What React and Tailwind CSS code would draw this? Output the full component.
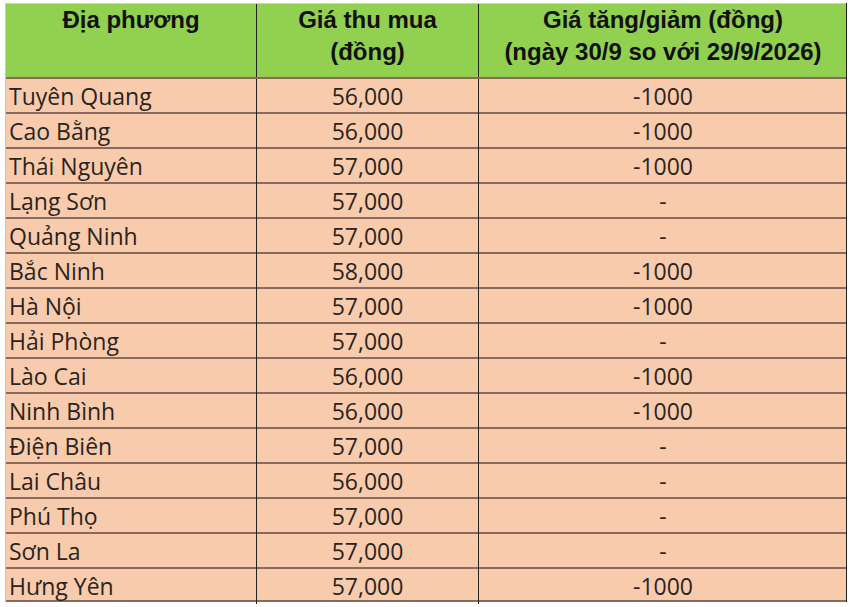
import React from "react";

const rows = [
  ["Tuyên Quang", "56,000", "-1000"],
  ["Cao Bằng", "56,000", "-1000"],
  ["Thái Nguyên", "57,000", "-1000"],
  ["Lạng Sơn", "57,000", "-"],
  ["Quảng Ninh", "57,000", "-"],
  ["Bắc Ninh", "58,000", "-1000"],
  ["Hà Nội", "57,000", "-1000"],
  ["Hải Phòng", "57,000", "-"],
  ["Lào Cai", "56,000", "-1000"],
  ["Ninh Bình", "56,000", "-1000"],
  ["Điện Biên", "57,000", "-"],
  ["Lai Châu", "56,000", "-"],
  ["Phú Thọ", "57,000", "-"],
  ["Sơn La", "57,000", "-"],
  ["Hưng Yên", "57,000", "-1000"],
];

export default function App() {
  return (
    <div className="w-[850px] h-[607px] bg-white overflow-hidden pt-[3px] pl-[5px]">
      <div className="w-[842px] border-l border-l-[#c8c8c8] border-r border-r-[#222]">
        {/* header */}
        <div
          className="grid grid-cols-[251px_222px_368px] h-[74px] bg-[#92d050] text-[#111] font-bold text-[24px] leading-[32px] border-t border-t-[#cfcfcf]"
          style={{ fontFamily: '"Liberation Sans", Arial, sans-serif' }}
        >
          <div className="text-center border-r border-[#222]">Địa phương</div>
          <div className="text-center border-r border-[#222]">
            Giá thu mua
            <br />
            (đồng)
          </div>
          <div className="text-center">
            Giá tăng/giảm (đồng)
            <br />
            (ngày 30/9 so với 29/9/2026)
          </div>
        </div>
        {/* body */}
        <div
          className="bg-[#f8cbad] text-[#2a2420] text-[23px]"
          style={{ fontFamily: '"Open Sans", "Noto Sans", sans-serif' }}
        >
          {rows.map((r) => (
            <div
              key={r[0]}
              className="grid grid-cols-[251px_222px_368px] h-[35px] border-t-2 border-[#8a6a5c] last:border-b-2"
            >
              <div className="pl-[3px] flex items-center border-r border-[#222]">
                {r[0]}
              </div>
              <div className="flex items-center justify-center border-r border-[#222]">
                {r[1]}
              </div>
              <div className="flex items-center justify-center">{r[2]}</div>
            </div>
          ))}
        </div>
      </div>
    </div>
  );
}
